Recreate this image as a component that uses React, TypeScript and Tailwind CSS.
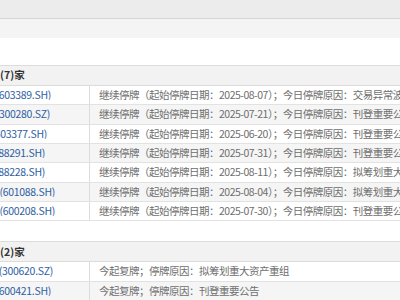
import React from 'react';

type Row = { code: string; end: number; text: string };

const suspended: Row[] = [
  { code: '(603389.SH)', end: 51, text: '继续停牌（起始停牌日期：2025-08-07）；今日停牌原因：交易异常波动' },
  { code: '(300280.SZ)', end: 50, text: '继续停牌（起始停牌日期：2025-07-21）；今日停牌原因：刊登重要公告' },
  { code: '(603377.SH)', end: 47, text: '继续停牌（起始停牌日期：2025-06-20）；今日停牌原因：刊登重要公告' },
  { code: '(688291.SH)', end: 45, text: '继续停牌（起始停牌日期：2025-07-31）；今日停牌原因：刊登重要公告' },
  { code: '(688228.SH)', end: 45, text: '继续停牌（起始停牌日期：2025-08-11）；今日停牌原因：拟筹划重大资产重组' },
  { code: '(601088.SH)', end: 55, text: '继续停牌（起始停牌日期：2025-08-04）；今日停牌原因：拟筹划重大资产重组' },
  { code: '(600208.SH)', end: 55, text: '继续停牌（起始停牌日期：2025-07-30）；今日停牌原因：刊登重要公告' },
];

const resumed: Row[] = [
  { code: '(300620.SZ)', end: 53, text: '今起复牌；停牌原因：拟筹划重大资产重组' },
  { code: '(600421.SH)', end: 51, text: '今起复牌；停牌原因：刊登重要公告' },
];

function Section({ title, rows }: { title: string; rows: Row[] }) {
  return (
    <div className="border-t border-[#dcdcdc]">
      {/* 表头 */}
      <div className="h-[20px] flex items-center bg-[#f2f2f2] border-b border-[#dcdcdc] font-bold text-[#333]">
        {title}
      </div>
      {rows.map((r, i) => (
        <div
          key={r.code}
          className={`h-[19.33px] flex items-center border-b border-[#e2e2e2] ${i % 2 === 1 ? 'bg-[#f5f5f5]' : 'bg-white'}`}
        >
          <div className="w-[90px] h-full shrink-0 flex items-center border-r border-[#dcdcdc]">
            {/* code column is cut on the left side */}
            <div
              className="flex justify-end overflow-hidden whitespace-nowrap text-[#2f5ea3] tracking-[-0.3px]"
              style={{ width: r.end }}
            >
              <span className="shrink-0">{r.code}</span>
            </div>
          </div>
          <div className="pl-[9px] whitespace-nowrap text-[#6e6e6e] tracking-[-0.5px]">{r.text}</div>
        </div>
      ))}
    </div>
  );
}

export default function App() {
  return (
    <div
      className="w-[400px] h-[300px] overflow-hidden bg-white text-[10.5px] leading-none"
      style={{ fontFamily: '"Noto Sans CJK SC", "Noto Sans", sans-serif' }}
    >
      <div className="h-[19px] bg-[#ececec] border-b border-[#d6d6d6]" />
      <div className="h-[19px] bg-[#f4f4f4]" />
      <div className="h-[27px]" />
      <Section title="(7)家" rows={suspended} />
      <div className="h-[20px]" />
      <Section title="(2)家" rows={resumed} />
    </div>
  );
}
